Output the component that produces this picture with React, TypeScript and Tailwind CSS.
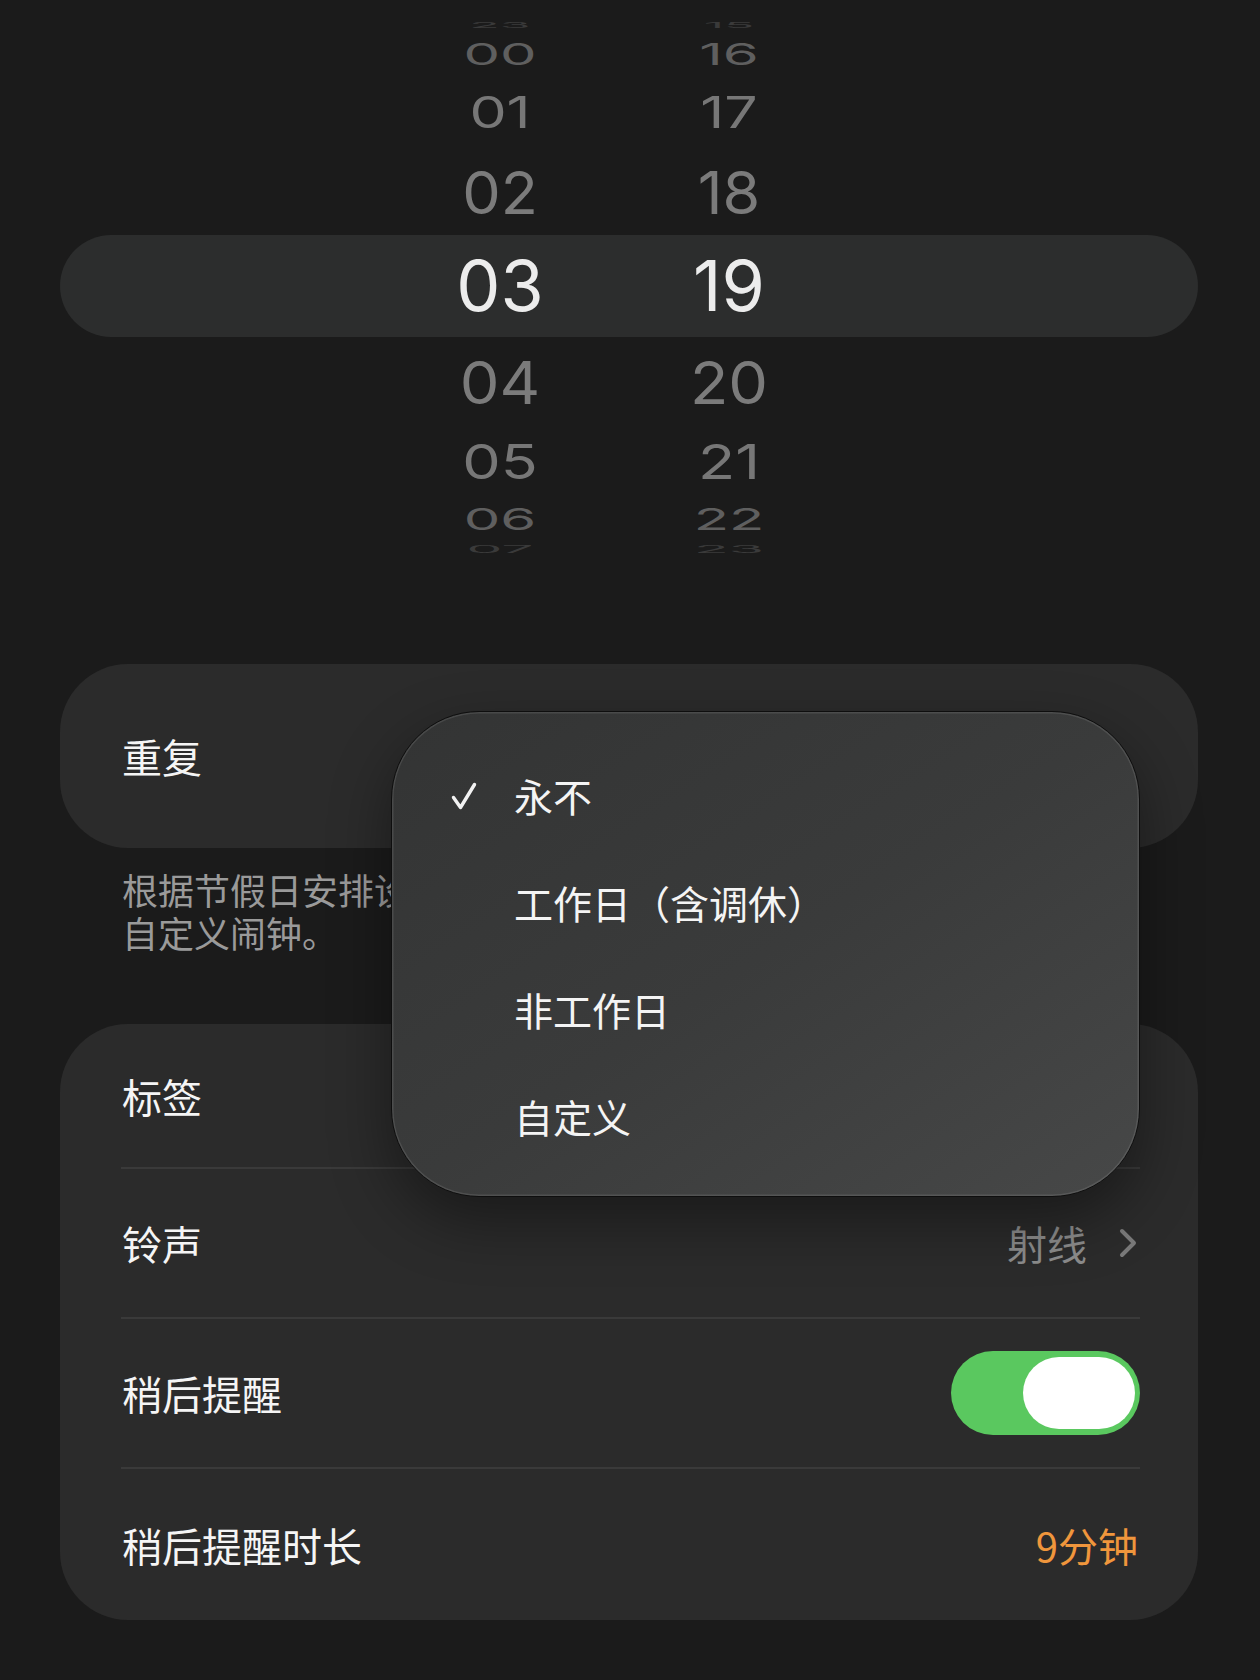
import React from "react"

// 滚轮上下方的数字：越远离中间越扁、越暗
type WheelRow = { h: string; hour: string; min: string; size: string; sy: string; color: string }

const topRows: WheelRow[] = [
  { h: "h-[20px]", hour: "23", min: "15", size: "text-[50px]", sy: "scale-y-[0.16]", color: "text-[#3a3a3a]" },
  { h: "h-[38px]", hour: "00", min: "16", size: "text-[58px]", sy: "scale-y-[0.52]", color: "text-[#5f5f5f]" },
  { h: "h-[78px]", hour: "01", min: "17", size: "text-[59px]", sy: "scale-y-[0.74]", color: "text-[#777777]" },
  { h: "h-[84px]", hour: "02", min: "18", size: "text-[61px]", sy: "scale-y-[0.96]", color: "text-[#7b7b7b]" },
]

const bottomRows: WheelRow[] = [
  { h: "h-[90px]", hour: "04", min: "20", size: "text-[63px]", sy: "scale-y-[0.94]", color: "text-[#7b7b7b]" },
  { h: "h-[70px]", hour: "05", min: "21", size: "text-[61px]", sy: "scale-y-[0.79]", color: "text-[#777777]" },
  { h: "h-[44px]", hour: "06", min: "22", size: "text-[58px]", sy: "scale-y-[0.52]", color: "text-[#5f5f5f]" },
  { h: "h-[16px]", hour: "07", min: "23", size: "text-[57px]", sy: "scale-y-[0.18]", color: "text-[#3a3a3a]" },
]

function Wheel({ row }: { row: WheelRow }) {
  const num = `block leading-none ${row.size} ${row.sy} ${row.color}`
  return (
    <div className={`flex items-center pl-[420px] gap-[69px] ${row.h}`}>
      <div className="w-[160px] flex justify-center">
        <span className={num}>{row.hour}</span>
      </div>
      <div className="w-[160px] flex justify-center">
        <span className={num}>{row.min}</span>
      </div>
    </div>
  )
}

function TimePicker() {
  return (
    <div className="h-[664px] pt-[15px] font-['Inter',sans-serif]">
      {topRows.map((r) => (
        <Wheel key={r.hour} row={r} />
      ))}
      {/* 选中行 */}
      <div className="ml-[60px] w-[1138px] h-[102px] rounded-full bg-[#2c2d2d] flex items-center pl-[360px] gap-[69px]">
        <div className="w-[160px] flex justify-center">
          <span className="block leading-none text-[70px] text-[#ececec]">03</span>
        </div>
        <div className="w-[160px] flex justify-center">
          <span className="block leading-none text-[70px] text-[#ececec]">19</span>
        </div>
      </div>
      {bottomRows.map((r) => (
        <Wheel key={r.hour} row={r} />
      ))}
    </div>
  )
}

function Chevron() {
  return (
    <svg width="18" height="30" viewBox="0 0 18 30" fill="none">
      <path d="M3 3 L15 15 L3 27" stroke="#7a7a7a" strokeWidth="4" strokeLinecap="round" strokeLinejoin="round" />
    </svg>
  )
}

function Toggle() {
  return (
    <div className="w-[189px] h-[84px] rounded-full bg-[#5ac85f] flex items-center justify-end pr-[5px]">
      <div className="w-[112px] h-[72px] rounded-full bg-white" />
    </div>
  )
}

function Divider() {
  return <div className="ml-[61px] mr-[58px] h-[2px] bg-[#3a3a3a]" />
}

function RepeatMenu() {
  const items = ["永不", "工作日（含调休）", "非工作日", "自定义"]
  return (
    <div className="absolute left-[391px] top-[711px] w-[749px] h-[486px] rounded-[88px] border-[1.5px] border-[#0e0e0e] bg-linear-to-br from-[#333434] via-[#3a3b3b] to-[#474848] shadow-[inset_0_0_0_1.5px_rgba(255,255,255,0.1),0_24px_60px_rgba(0,0,0,0.4)] pt-[30px]">
      {items.map((item, i) => (
        <div key={item} className="h-[107px] flex items-center pl-[58px] gap-[36px]">
          <div className="w-[28px] flex justify-center">
            {i === 0 && (
              <svg width="26" height="28" viewBox="0 0 26 28" fill="none">
                <path d="M2.5 15.5 L9.5 25.5 L23.5 2.5" stroke="#f2f2f2" strokeWidth="3.4" strokeLinecap="round" strokeLinejoin="round" />
              </svg>
            )}
          </div>
          <span className="text-[39px] leading-none text-[#f4f4f4]">{item}</span>
        </div>
      ))}
    </div>
  )
}

export default function App() {
  return (
    <div className="relative w-[1260px] h-[1680px] overflow-hidden bg-[#1b1b1b] text-[#f5f5f5] font-['Noto_Sans_CJK_SC','Liberation_Sans',sans-serif]">
      <TimePicker />

      {/* 重复 */}
      <div className="ml-[60px] w-[1138px] h-[184px] rounded-[68px] bg-[#2b2b2b] flex items-center pl-[62px]">
        <span className="text-[40px] leading-none">重复</span>
      </div>

      <p className="mt-[20px] pl-[122px] text-[36px] leading-[43px] text-[#9a9a9a]">
        根据节假日安排设置的闹钟会自动适配调休，你也可以
        <br />
        自定义闹钟。
      </p>

      {/* 标签 / 铃声 / 稍后提醒 */}
      <div className="mt-[70px] ml-[60px] w-[1138px] h-[596px] rounded-[68px] bg-[#2b2b2b] flex flex-col">
        <div className="h-[143px] flex items-center pl-[62px]">
          <span className="text-[40px] leading-none">标签</span>
        </div>
        <Divider />
        <div className="h-[148px] flex items-center justify-between pl-[62px] pr-[61px]">
          <span className="text-[40px] leading-none">铃声</span>
          <div className="flex items-center gap-[32px]">
            <span className="text-[40px] leading-none text-[#8c8c8c]">射线</span>
            <Chevron />
          </div>
        </div>
        <Divider />
        <div className="h-[148px] flex items-center justify-between pl-[62px] pr-[58px]">
          <span className="text-[40px] leading-none">稍后提醒</span>
          <Toggle />
        </div>
        <Divider />
        <div className="flex-1 flex items-center justify-between pl-[62px] pr-[60px]">
          <span className="text-[40px] leading-none">稍后提醒时长</span>
          <span className="text-[40px] leading-none text-[#f0963c]">9分钟</span>
        </div>
      </div>

      <RepeatMenu />
    </div>
  )
}
